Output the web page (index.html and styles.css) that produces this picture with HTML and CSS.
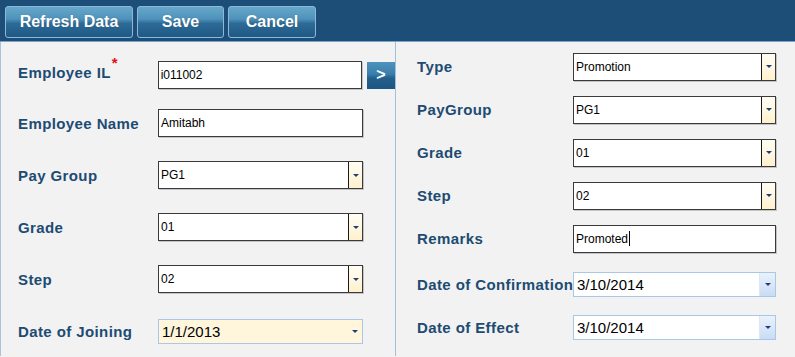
FILE: index.html
```html
<!DOCTYPE html>
<html lang="en">
<head>
  <meta charset="UTF-8">
  <title>Employee Promotion</title>
  <link rel="stylesheet" href="styles.css">
</head>
<body>

  <div class="toolbar">
    <button class="tool-btn btn-refresh">Refresh Data</button>
    <button class="tool-btn btn-save">Save</button>
    <button class="tool-btn btn-cancel">Cancel</button>
  </div>

  <div class="content">
    <div class="panel panel-left">
      <div class="row row-first">
        <label class="label">Employee IL<span class="req">*</span></label>
        <div class="textbox"><span>i011002</span></div>
        <button class="go-btn">&gt;</button>
      </div>
      <div class="row">
        <label class="label">Employee Name</label>
        <div class="textbox"><span>Amitabh</span></div>
      </div>
      <div class="row">
        <label class="label">Pay Group</label>
        <div class="combo"><span>PG1</span><i class="combo-arrow"><b></b></i></div>
      </div>
      <div class="row">
        <label class="label">Grade</label>
        <div class="combo"><span>01</span><i class="combo-arrow"><b></b></i></div>
      </div>
      <div class="row">
        <label class="label">Step</label>
        <div class="combo"><span>02</span><i class="combo-arrow"><b></b></i></div>
      </div>
      <div class="row">
        <label class="label">Date of Joining</label>
        <div class="datebox datebox-focus"><span>1/1/2013</span><i class="date-arrow"><b></b></i></div>
      </div>
    </div>

    <div class="panel panel-right">
      <div class="row">
        <label class="label">Type</label>
        <div class="combo"><span>Promotion</span><i class="combo-arrow"><b></b></i></div>
      </div>
      <div class="row">
        <label class="label">PayGroup</label>
        <div class="combo"><span>PG1</span><i class="combo-arrow"><b></b></i></div>
      </div>
      <div class="row">
        <label class="label">Grade</label>
        <div class="combo"><span>01</span><i class="combo-arrow"><b></b></i></div>
      </div>
      <div class="row">
        <label class="label">Step</label>
        <div class="combo"><span>02</span><i class="combo-arrow"><b></b></i></div>
      </div>
      <div class="row">
        <label class="label">Remarks</label>
        <div class="textbox"><span>Promoted<i class="caret"></i></span></div>
      </div>
      <div class="row row-date">
        <label class="label">Date of Confirmation</label>
        <div class="datebox"><span>3/10/2014</span><i class="date-arrow"><b></b></i></div>
      </div>
      <div class="row">
        <label class="label">Date of Effect</label>
        <div class="datebox"><span>3/10/2014</span><i class="date-arrow"><b></b></i></div>
      </div>
    </div>
  </div>

</body>
</html>
```

FILE: styles.css
```css
html, body {
  margin: 0;
  height: 100%;
}
body {
  font-family: Arial, "Liberation Sans", sans-serif;
  background-color: #f2f2f2;
  overflow: hidden;
}

/* toolbar */
.toolbar {
  height: 42px;
  background-color: #1c4e77;
  border-bottom: 1px solid #7aa3c9;
  display: flex;
  align-items: flex-start;
  gap: 4px;
  padding: 6px 0 0 5px;
  box-sizing: border-box;
}
.tool-btn {
  height: 32px;
  border: 1px solid #8fb8d8;
  border-radius: 3px;
  background: linear-gradient(to bottom, #66a8cc 0%, #4f92ba 40%, #2d6a96 55%, #1f5986 100%);
  color: #fff;
  font-family: Arial, "Liberation Sans", sans-serif;
  font-size: 16px;
  font-weight: bold;
  padding: 0;
  text-shadow: 0 0 1px rgba(0, 0, 0, 0.3);
}
.btn-refresh { width: 128px; }
.btn-save { width: 87px; }
.btn-cancel { width: 88px; }

/* layout */
.content {
  display: grid;
  grid-template-columns: 396px 1fr;
  height: calc(100% - 43px);
}
.panel {
  display: flex;
  flex-direction: column;
  box-sizing: border-box;
}
.panel-left {
  border-left: 1px solid #a9c3de;
  border-right: 1px solid #a3bfdc;
  padding: 19px 0 0 17px;
  gap: 24px;
}
.panel-right {
  padding: 10px 0 0 21px;
  gap: 14px;
}
.row {
  display: flex;
  align-items: center;
  height: 28px;
}
.panel-left .row-first {
  margin-bottom: -4px;
}
.panel-right .row {
  height: 29px;
}
.panel-right .row-date {
  margin-top: 3px;
}
.label {
  font-size: 15px;
  font-weight: bold;
  letter-spacing: 0.4px;
  color: #1d4b72;
  white-space: nowrap;
}
.panel-left .label {
  width: 140px;
}
.panel-left .row-first .label {
  margin-top: -5px;
}
.panel-right .label {
  width: 156px;
}
.req {
  position: relative;
  top: -10px;
  margin-left: 1px;
  color: #e01010;
  font-size: 15px;
}

/* controls */
.textbox, .combo, .datebox {
  width: 205px;
  height: 28px;
  box-sizing: border-box;
  display: flex;
  align-items: center;
  background-color: #fff;
  font-size: 12px;
  color: #000;
}
.panel-right .textbox, .panel-right .combo, .panel-right .datebox {
  width: 203px;
}
.textbox, .combo {
  border: 1px solid #3a3a3a;
  box-shadow: 1px 1px 0 #c4c4c4;
}
.textbox span, .combo span {
  flex: 1;
  padding-left: 2px;
}
.caret {
  display: inline-block;
  width: 1px;
  height: 15px;
  margin-left: 1px;
  vertical-align: -3px;
  background-color: #000;
}
.combo-arrow {
  width: 13px;
  height: 100%;
  border-left: 1px solid #1a1a1a;
  background: linear-gradient(to bottom, #fffdf3, #fff1cf);
  display: flex;
  align-items: center;
  justify-content: center;
}
.combo-arrow b, .date-arrow b {
  width: 0;
  height: 0;
  border-left: 3px solid transparent;
  border-right: 3px solid transparent;
  border-top: 3px solid #1c3f7a;
}
.datebox {
  height: 25px;
  border: 1px solid #a9c7e8;
  font-size: 15px;
}
.datebox span {
  flex: 1;
  padding-left: 3px;
}
.datebox-focus {
  background-color: #fff6dc;
}
.date-arrow {
  width: 14px;
  height: 100%;
  display: flex;
  align-items: center;
  justify-content: center;
}
.panel-right .date-arrow {
  width: 15px;
  background: linear-gradient(to bottom, #eaf2fc, #c9dcf4);
  border-left: 1px solid #dbe7f5;
}
.go-btn {
  width: 28px;
  height: 27px;
  margin-left: 5px;
  border: none;
  padding: 0;
  background: linear-gradient(to bottom, #4d93bd 0%, #3a7fab 45%, #235f8d 60%, #1c5683 100%);
  color: #fff;
  font-family: Arial, "Liberation Sans", sans-serif;
  font-size: 16px;
  font-weight: bold;
}
```
